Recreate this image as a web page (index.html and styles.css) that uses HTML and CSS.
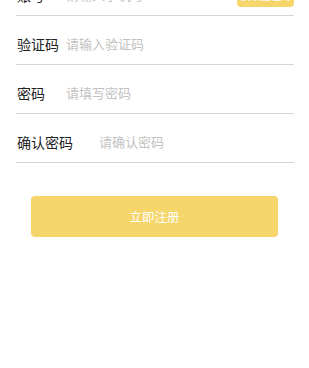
FILE: index.html
```html
<!DOCTYPE html>
<html lang="zh-CN">
<head>
  <meta charset="UTF-8">
  <title>注册</title>
  <link rel="stylesheet" href="styles.css">
</head>
<body>
  <div class="register">
    <div class="form-row">
      <span class="label">账号</span>
      <input type="text" class="field" placeholder="请输入手机号">
      <button class="code-btn">获取验证码</button>
    </div>
    <div class="form-row">
      <span class="label">验证码</span>
      <input type="text" class="field" placeholder="请输入验证码">
    </div>
    <div class="form-row">
      <span class="label">密码</span>
      <input type="password" class="field" placeholder="请填写密码">
    </div>
    <div class="form-row">
      <span class="label label-wide">确认密码</span>
      <input type="password" class="field" placeholder="请确认密码">
    </div>
    <button class="submit-btn">立即注册</button>
  </div>
</body>
</html>
```

FILE: styles.css
```css
body {
  margin: 0;
  font-family: "Noto Sans CJK SC", "Noto Sans", sans-serif;
  background-color: #fff;
}
.register {
  margin-top: -33px;
  padding: 0 15px 0 16px;
}
.form-row {
  display: flex;
  align-items: center;
  height: 20px;
  padding: 18px 0 10px;
  border-bottom: 1px solid #d6d6d6;
}
.label {
  width: 49px;
  font-size: 14px;
  line-height: 20px;
  color: #222;
  padding-left: 1px;
}
.label-wide {
  width: 82px;
}
.field {
  flex: 1;
  min-width: 0;
  border: none;
  outline: none;
  padding: 0;
  font-family: inherit;
  font-size: 13px;
  line-height: 20px;
  color: #333;
  background: transparent;
}
.field::placeholder {
  color: #c2c2c2;
}
.code-btn {
  width: 57px;
  height: 24px;
  border: none;
  border-radius: 4px;
  background-color: #f6d56a;
  color: #fff;
  font-family: inherit;
  font-size: 10px;
  padding: 0;
}
.submit-btn {
  display: block;
  width: 247px;
  height: 41px;
  margin: 33px 0 0 15px;
  border: none;
  border-radius: 4px;
  background-color: #f6d56a;
  color: #fff;
  font-family: inherit;
  font-size: 12.5px;
  cursor: pointer;
}
```
